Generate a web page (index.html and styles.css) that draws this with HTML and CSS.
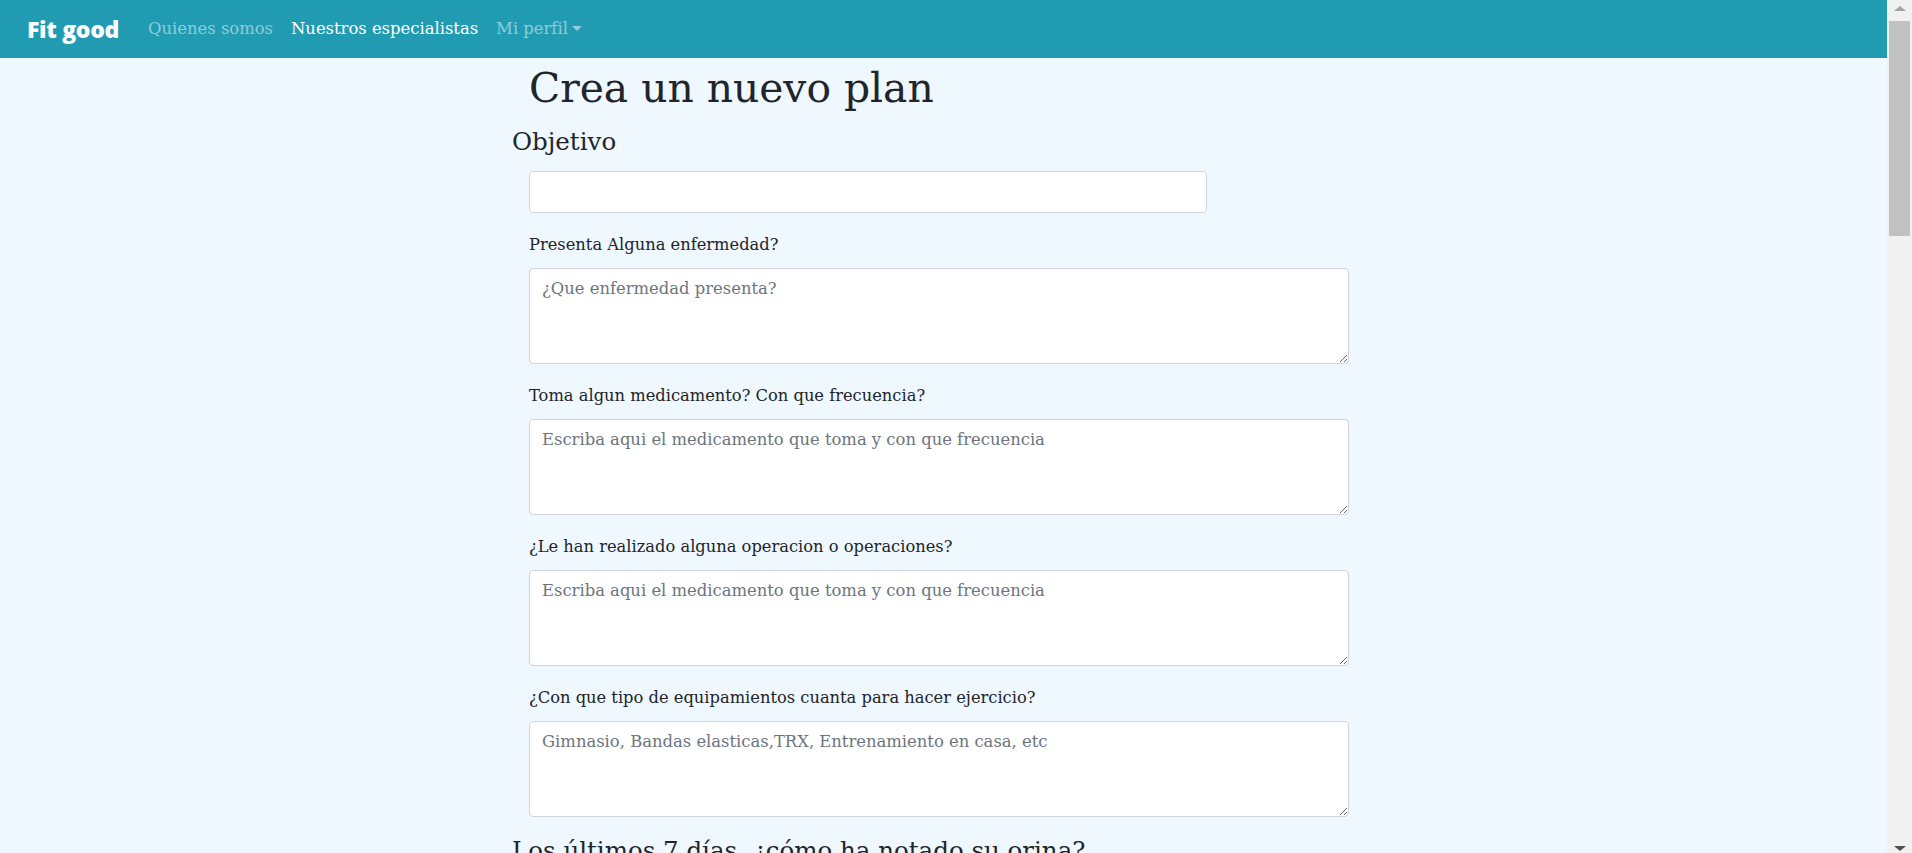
FILE: index.html
```html
<!DOCTYPE html>
<html lang="es">
<head>
<meta charset="utf-8">
<title>Fit good - Crea un nuevo plan</title>
<link rel="stylesheet" href="styles.css">
</head>
<body>
<div class="window">
  <div class="viewport">
    <nav class="navbar">
      <a class="brand" href="#">Fit good</a>
      <ul class="nav">
        <li><a class="nav-link" href="#">Quienes somos</a></li>
        <li><a class="nav-link active" href="#">Nuestros especialistas</a></li>
        <li><a class="nav-link" href="#">Mi perfil<span class="caret"></span></a></li>
      </ul>
    </nav>
    <main class="page">
      <h1 class="title">Crea un nuevo plan</h1>
      <h2 class="subtitle">Objetivo</h2>
      <form class="form">
        <div class="group">
          <input class="field field-short" type="text">
        </div>
        <div class="group">
          <label class="label">Presenta Alguna enfermedad?</label>
          <textarea class="field" placeholder="¿Que enfermedad presenta?"></textarea>
        </div>
        <div class="group">
          <label class="label">Toma algun medicamento? Con que frecuencia?</label>
          <textarea class="field" placeholder="Escriba aqui el medicamento que toma y con que frecuencia"></textarea>
        </div>
        <div class="group">
          <label class="label">¿Le han realizado alguna operacion o operaciones?</label>
          <textarea class="field" placeholder="Escriba aqui el medicamento que toma y con que frecuencia"></textarea>
        </div>
        <div class="group">
          <label class="label">¿Con que tipo de equipamientos cuanta para hacer ejercicio?</label>
          <textarea class="field" placeholder="Gimnasio, Bandas elasticas,TRX, Entrenamiento en casa, etc"></textarea>
        </div>
      </form>
      <h2 class="subtitle section">Los últimos 7 días, ¿cómo ha notado su orina?</h2>
    </main>
  </div>
  <div class="scrollbar">
    <div class="sb-btn"><span class="arrow-up"></span></div>
    <div class="sb-thumb"></div>
    <div class="sb-space"></div>
    <div class="sb-btn"><span class="arrow-down"></span></div>
  </div>
</div>
</body>
</html>
```

FILE: styles.css
```css
* { box-sizing: border-box; }
html, body { margin: 0; height: 100%; overflow: hidden; }
body { font-family: "DejaVu Serif", "Liberation Serif", serif; color: #212529; }

.window { display: flex; height: 100%; }
.viewport { flex: 1; min-width: 0; background: #eff7ff; overflow: hidden; }

.navbar { height: 58px; background: #209bb2; display: flex; align-items: center; padding-left: 27px; }
.brand { font-family: "Open Sans", sans-serif; font-weight: 800; font-size: 23px; color: #fff; text-decoration: none; letter-spacing: -0.3px; margin-right: 20px; }
.nav { display: flex; list-style: none; margin: 0; padding: 0; }
.nav-link { display: block; padding: 0 9px; font-size: 16.4px; line-height: 24px; color: rgba(255, 255, 255, 0.5); text-decoration: none; }
.nav-link.active { color: #fff; }
.caret { display: inline-block; margin-left: 4px; vertical-align: 3px; border-top: 5px solid; border-left: 5px solid transparent; border-right: 5px solid transparent; }

.page { padding-left: 512px; }
.title { font-size: 40.8px; font-weight: 400; line-height: 60px; margin: 0 0 6px 17px; }
.subtitle { font-size: 24.5px; font-weight: 400; line-height: 36px; margin: 0 0 11px; }
.section { margin-top: 6px; }
.form { margin-left: 17px; }
.group { margin-bottom: 16px; }
.label { display: block; font-size: 16.3px; line-height: 32px; margin-bottom: 7px; }
.field { display: block; width: 820px; height: 96px; margin: 0; border: 1px solid #ced4da; border-radius: 4px; background: #fff; padding: 5px 12px; font-family: inherit; font-size: 16.4px; line-height: 30px; color: #495057; }
.field-short { width: 678px; height: 42px; }
.field::placeholder { color: #6c757d; opacity: 1; }

.scrollbar { width: 25px; background: #f1f1f1; display: flex; flex-direction: column; align-items: center; }
.sb-btn { height: 17px; width: 100%; display: flex; align-items: center; justify-content: center; }
.arrow-up { border-bottom: 5px solid #a3a3a3; border-left: 6px solid transparent; border-right: 6px solid transparent; }
.arrow-down { border-top: 5px solid #505050; border-left: 6px solid transparent; border-right: 6px solid transparent; margin-top: 8px; }
.sb-thumb { margin-top: 4px; width: 21px; height: 215px; background: #c1c1c1; }
.sb-space { flex: 1; }
```
